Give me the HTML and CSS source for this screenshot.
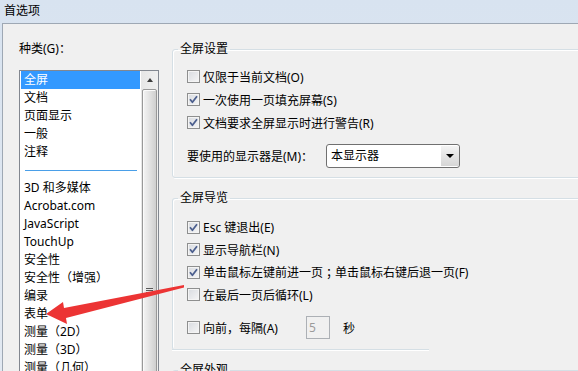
FILE: index.html
```html
<!DOCTYPE html>
<html lang="zh-CN">
<head>
<meta charset="utf-8">
<title>首选项</title>
<link rel="stylesheet" href="styles.css">
</head>
<body>
<div class="titlebar">首选项</div>
<div class="window">
  <div class="left">
    <div class="label">种类(G)<span class="fw">：</span></div>
    <div class="list">
      <div class="items">
        <div class="item selected">全屏</div>
        <div class="item">文档</div>
        <div class="item">页面显示</div>
        <div class="item">一般</div>
        <div class="item">注释</div>
        <div class="item sep"><span class="sep-line"></span></div>
        <div class="item">3D 和多媒体</div>
        <div class="item">Acrobat.com</div>
        <div class="item">JavaScript</div>
        <div class="item">TouchUp</div>
        <div class="item">安全性</div>
        <div class="item">安全性（增强）</div>
        <div class="item">编录</div>
        <div class="item">表单</div>
        <div class="item">测量（2D）</div>
        <div class="item">测量（3D）</div>
        <div class="item">测量（几何）</div>
        <div class="item">多媒体（旧版）</div>
      </div>
      <div class="scrollbar">
        <div class="sb-up"><span class="tri-up"></span></div>
        <div class="thumb"><span class="grip"></span></div>
      </div>
    </div>
  </div>
  <div class="right">
    <fieldset class="group g1">
      <legend>全屏设置</legend>
      <div class="group-body b1">
        <div class="row"><span class="cb"></span>仅限于当前文档(O)</div>
        <div class="row"><span class="cb"><svg viewBox="0 0 13 13" width="13" height="13"><path d="M3 6.3 L5.4 9.2 L10 3.3" fill="none" stroke="#4c5f8e" stroke-width="1.8" stroke-linejoin="round"/></svg></span>一次使用一页填充屏幕(S)</div>
        <div class="row"><span class="cb"><svg viewBox="0 0 13 13" width="13" height="13"><path d="M3 6.3 L5.4 9.2 L10 3.3" fill="none" stroke="#4c5f8e" stroke-width="1.8" stroke-linejoin="round"/></svg></span>文档要求全屏显示时进行警告(R)</div>
        <div class="row display-row">
          <span class="display-label">要使用的显示器是(M)<span class="fw">：</span></span>
          <span class="select"><span class="select-text">本显示器</span><span class="select-btn"><span class="tri-down"></span></span></span>
        </div>
      </div>
    </fieldset>
    <fieldset class="group g2">
      <legend>全屏导览</legend>
      <div class="group-body b2">
        <div class="row r2"><span class="cb"><svg viewBox="0 0 13 13" width="13" height="13"><path d="M3 6.3 L5.4 9.2 L10 3.3" fill="none" stroke="#4c5f8e" stroke-width="1.8" stroke-linejoin="round"/></svg></span>Esc 键退出(E)</div>
        <div class="row r2"><span class="cb"><svg viewBox="0 0 13 13" width="13" height="13"><path d="M3 6.3 L5.4 9.2 L10 3.3" fill="none" stroke="#4c5f8e" stroke-width="1.8" stroke-linejoin="round"/></svg></span>显示导航栏(N)</div>
        <div class="row r2"><span class="cb"><svg viewBox="0 0 13 13" width="13" height="13"><path d="M3 6.3 L5.4 9.2 L10 3.3" fill="none" stroke="#4c5f8e" stroke-width="1.8" stroke-linejoin="round"/></svg></span>单击鼠标左键前进一页<span class="fw">；</span>单击鼠标右键后退一页(F)</div>
        <div class="row r2"><span class="cb"></span>在最后一页后循环(L)</div>
        <div class="row interval-row"><span class="cb"></span><span class="interval-label">向前<span class="fw">，</span>每隔(A)</span><span class="num-input">5</span><span class="unit">秒</span></div>
      </div>
    </fieldset>
    <fieldset class="group g3">
      <legend>全屏外观</legend>
      <div class="group-body b3"></div>
    </fieldset>
  </div>
</div>
<svg class="arrow" width="578" height="371" viewBox="0 0 578 371">
  <polygon points="46,314 63,302 64,308 184,285 184,287.5 66,318 67,324" fill="#ec3434"/>
</svg>
</body>
</html>
```

FILE: styles.css
```css
html, body {
  margin: 0;
  padding: 0;
}

body {
  width: 578px;
  height: 371px;
  overflow: hidden;
  position: relative;
  background: linear-gradient(to bottom, #d8e3f0, #e2e9f2);
  font-family: "Noto Sans", "Noto Sans CJK SC", sans-serif;
  font-size: 12px;
  color: #000;
}

.fw {
  font-family: "Noto Sans CJK TC", "Noto Sans CJK SC", sans-serif;
}

.titlebar {
  height: 23px;
  padding-left: 4px;
  line-height: 21px;
  font-size: 12px;
  box-sizing: border-box;
}

.window {
  margin-left: 2px;
  height: 348px;
  border-top: 1px solid #9ea8b4;
  border-left: 1px solid #9ea8b4;
  background: #f0f0f0;
  display: flex;
  overflow: hidden;
}

.left {
  padding-top: 15px;
  padding-left: 16px;
  flex: 0 0 auto;
}

.label {
  line-height: 18px;
  height: 18px;
}

.list {
  margin-top: 13px;
  width: 138px;
  height: 320px;
  border: 1px solid #828790;
  background: #fff;
  display: flex;
  overflow: hidden;
}

.items {
  width: 121px;
  flex: 0 0 121px;
}

.item {
  height: 18px;
  line-height: 18px;
  padding-left: 3px;
  margin-left: 1px;
  width: 116px;
  white-space: nowrap;
}

.item.selected {
  background: #3399ff;
  color: #fff;
}

.item.sep {
  display: flex;
  align-items: center;
  padding-left: 4px;
}

.sep-line {
  display: block;
  width: 112px;
  height: 1px;
  background: #4a9fe8;
}

.scrollbar {
  width: 17px;
  flex: 0 0 17px;
  background: linear-gradient(to right, #e6e6e6, #efefef);
  display: flex;
  flex-direction: column;
  align-items: center;
}

.sb-up {
  height: 18px;
  width: 17px;
  flex: 0 0 18px;
  display: flex;
  align-items: center;
  justify-content: center;
}

.tri-up {
  width: 0;
  height: 0;
  border-left: 3.5px solid transparent;
  border-right: 3.5px solid transparent;
  border-bottom: 4px solid #3c3c3c;
}

.thumb {
  width: 13px;
  height: 404px;
  border: 1px solid #989898;
  border-radius: 2px;
  background: linear-gradient(to right, #f4f4f4, #e4e4e4 45%, #cfcfcf);
  box-shadow: inset 1px 1px 0 #fbfbfb;
  display: flex;
  flex-direction: column;
  align-items: center;
  flex: 0 0 404px;
}

.grip {
  display: block;
  margin-top: 198px;
  width: 7px;
  height: 7px;
  background: repeating-linear-gradient(to bottom, #5a5a5a 0, #5a5a5a 1px, #e8e8e8 1px, #e8e8e8 2px);
}

.right {
  margin-left: 13px;
  padding-top: 16px;
  flex: 0 0 auto;
}

.group {
  margin: 0;
  padding: 0;
  width: 500px;
  border: 1px solid #d5dfe5;
  border-radius: 3px;
  box-shadow: inset 1px 1px 0 #fff, 1px 1px 0 #fff;
  position: relative;
}

.group legend {
  margin-left: 5px;
  padding: 0 2px;
  line-height: 18px;
  height: 18px;
  font-size: 12px;
}

.group-body {
  padding-left: 14px;
}

.b1 {
  padding-top: 7px;
  padding-bottom: 9px;
}

.row {
  display: flex;
  align-items: center;
  height: 23px;
  white-space: nowrap;
}

.r2 {
  height: 22.5px;
}

.cb {
  width: 11px;
  height: 11px;
  border: 1px solid #8e8f8f;
  background: linear-gradient(135deg, #d8dbe0, #f6f6f6);
  box-shadow: inset 0 0 0 1px #f4f4f4;
  margin-right: 3px;
  position: relative;
  flex: 0 0 auto;
}

.cb svg {
  position: absolute;
  left: -1px;
  top: -1px;
}

.display-row {
  margin-top: 10px;
  height: 24px;
}

.display-label {
  display: inline-block;
  width: 139px;
}

.select {
  width: 132px;
  height: 22px;
  border: 1px solid #707070;
  border-radius: 3px;
  background: #fff;
  display: flex;
  align-items: stretch;
}

.select-text {
  flex: 1;
  padding-left: 4px;
  line-height: 22px;
}

.select-btn {
  width: 18px;
  margin: 1px 0 1px 0;
  background: linear-gradient(to bottom, #f3f3f3, #d6d6d6);
  display: flex;
  align-items: center;
  justify-content: center;
}

.tri-down {
  width: 0;
  height: 0;
  border-left: 4px solid transparent;
  border-right: 4px solid transparent;
  border-top: 4px solid #000;
}

.g2 {
  margin-top: 11px;
  border-bottom-color: transparent;
  box-shadow: inset 1px 1px 0 #fff;
}

.g2::after {
  content: "";
  position: absolute;
  left: -1px;
  bottom: -1px;
  width: 257px;
  height: 1px;
  background: #d5dfe5;
  box-shadow: 0 1px 0 #fff;
}

.b2 {
  padding-top: 9px;
  padding-bottom: 10px;
}

.interval-row {
  margin-top: 10px;
  height: 23px;
}

.interval-label {
  display: inline-block;
  width: 103px;
}

.num-input {
  width: 20px;
  height: 21px;
  border: 1px solid #acb0b5;
  background: #f0f0f0;
  color: #9a9a9a;
  padding-left: 2px;
  line-height: 21px;
}

.unit {
  margin-left: 13px;
}

.g3 {
  margin-top: 11px;
}

.b3 {
  height: 40px;
}

.arrow {
  position: absolute;
  left: 0;
  top: 0;
  pointer-events: none;
}
```
